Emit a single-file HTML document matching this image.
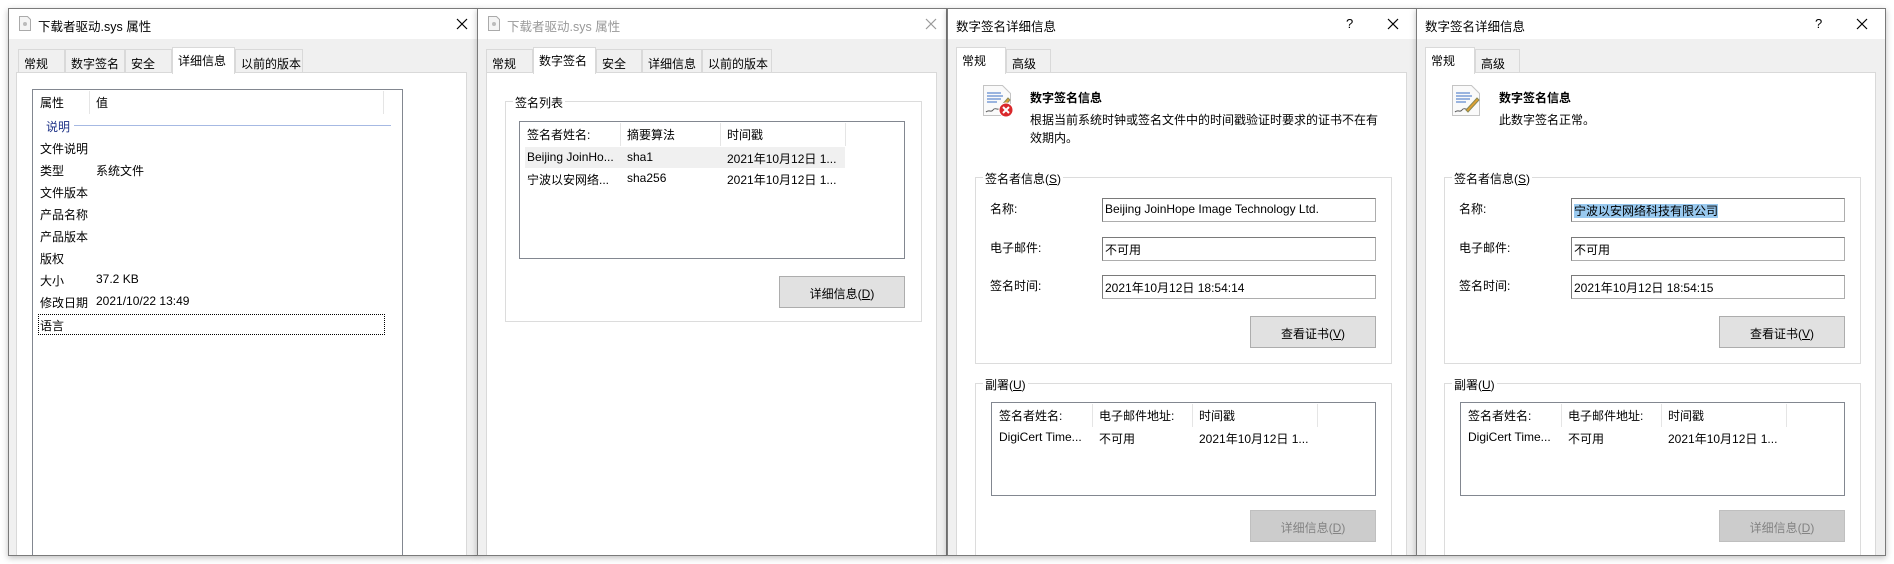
<!DOCTYPE html>
<html><head><meta charset="utf-8">
<style>
*{box-sizing:border-box;margin:0;padding:0}
body{width:1894px;height:564px;position:relative;background:#fff;overflow:hidden;font-family:"Liberation Sans","Noto Sans CJK SC",sans-serif;font-size:12px;color:#000}
.a{position:absolute;white-space:nowrap}
.win{position:absolute;top:8px;width:470px;height:548px;background:#f0f0f0;border:1px solid #7a7a7a;box-shadow:0 2px 6px rgba(0,0,0,.25);overflow:hidden}
.tb{position:absolute;left:0;top:0;width:100%;height:30px;background:#fff}
.tab{position:absolute;top:40px;height:24px;border:1px solid #d9d9d9;border-bottom:none;background:#f0f0f0;padding:5px 0 0 5px}
.tab.sel{top:38px;height:27px;background:#fff;z-index:3;padding-top:4px}
.panel{position:absolute;top:63px;left:8px;width:451px;height:500px;background:#fff;border:1px solid #d9d9d9}
.grp{position:absolute;border:1px solid #dcdcdc}
.gl{position:absolute;top:-8px;left:7px;background:#fff;padding:0 2px}
.lb{position:absolute;border:1px solid #828790;background:#fff}
.fld{position:absolute;border:1px solid #adadad;border-top-color:#7a7a7a;border-left-color:#7a7a7a;background:#fff;padding:3px 0 0 2px;height:24px}
.btn{position:absolute;background:#e1e1e1;border:1px solid #adadad;text-align:center;padding-top:8px}
.btn.dis{background:#cccccc;border-color:#bfbfbf;color:#838383}
.sep{position:absolute;width:1px;background:#e5e5e5}
u{text-decoration:underline}
</style></head><body>

<!-- Window 1 -->
<div class="win" style="left:8px">
 <div class="tb">
  <svg class="a" style="left:10px;top:7px" width="12" height="15"><path d="M0.5 .5h8l3 3v11h-11z" fill="#f4f4f4" stroke="#aaa"/><circle cx="6" cy="8" r="2" fill="#bbb"/></svg>
  <div class="a" style="left:29px;top:7px;font-size:12.5px">下载者驱动.sys 属性</div>
  <svg class="a" style="left:447px;top:9px" width="12" height="12"><path d="M1 1L11 11M11 1L1 11" stroke="#000" stroke-width="1.2"/></svg>
 </div>
 <div class="tab" style="left:9px;width:47px">常规</div>
 <div class="tab" style="left:56px;width:60px">数字签名</div>
 <div class="tab" style="left:116px;width:47px">安全</div>
 <div class="tab sel" style="left:163px;width:63px">详细信息</div>
 <div class="tab" style="left:226px;width:68px">以前的版本</div>
 <div class="panel" style="left:7px">
  <div class="lb" style="left:15px;top:16px;width:371px;height:500px">
   <div class="a" style="left:7px;top:4px">属性</div>
   <div class="sep" style="left:56px;top:1px;height:23px"></div>
   <div class="a" style="left:63px;top:4px">值</div>
   <div class="sep" style="left:350px;top:1px;height:23px"></div>
   <div class="a" style="left:13px;top:28px;color:#1e3287">说明</div>
   <div class="a" style="left:41px;top:35px;width:317px;height:1px;background:#a6b9e3"></div>
   <div class="a" style="left:7px;top:50px">文件说明</div>
   <div class="a" style="left:7px;top:72px">类型</div><div class="a" style="left:63px;top:72px">系统文件</div>
   <div class="a" style="left:7px;top:94px">文件版本</div>
   <div class="a" style="left:7px;top:116px">产品名称</div>
   <div class="a" style="left:7px;top:138px">产品版本</div>
   <div class="a" style="left:7px;top:160px">版权</div>
   <div class="a" style="left:7px;top:182px">大小</div><div class="a" style="left:63px;top:182px">37.2 KB</div>
   <div class="a" style="left:7px;top:204px">修改日期</div><div class="a" style="left:63px;top:204px">2021/10/22 13:49</div>
   <div class="a" style="left:5px;top:224px;width:347px;height:21px;border:1px dotted #000;padding:2px 0 0 1px">语言</div>
  </div>
 </div>
</div>

<!-- Window 2 -->
<div class="win" style="left:477px">
 <div class="tb">
  <svg class="a" style="left:10px;top:7px" width="12" height="15"><path d="M0.5 .5h8l3 3v11h-11z" fill="#f4f4f4" stroke="#aaa"/><circle cx="6" cy="8" r="2" fill="#bbb"/></svg>
  <div class="a" style="left:29px;top:7px;font-size:12.5px;color:#999">下载者驱动.sys 属性</div>
  <svg class="a" style="left:447px;top:9px" width="12" height="12"><path d="M1 1L11 11M11 1L1 11" stroke="#999" stroke-width="1.2"/></svg>
 </div>
 <div class="tab" style="left:8px;width:47px">常规</div>
 <div class="tab sel" style="left:55px;width:63px">数字签名</div>
 <div class="tab" style="left:118px;width:46px">安全</div>
 <div class="tab" style="left:164px;width:60px">详细信息</div>
 <div class="tab" style="left:224px;width:70px">以前的版本</div>
 <div class="panel">
  <div class="grp" style="left:18px;top:28px;width:417px;height:221px">
   <div class="gl">签名列表</div>
   <div class="lb" style="left:13px;top:19px;width:386px;height:138px">
    <div class="a" style="left:7px;top:4px">签名者姓名:</div>
    <div class="sep" style="left:100px;top:1px;height:23px"></div>
    <div class="a" style="left:107px;top:4px">摘要算法</div>
    <div class="sep" style="left:200px;top:1px;height:23px"></div>
    <div class="a" style="left:207px;top:4px">时间戳</div>
    <div class="sep" style="left:325px;top:1px;height:23px"></div>
    <div class="a" style="left:5px;top:25px;width:320px;height:21px;background:#f0f0f0"></div>
    <div class="a" style="left:7px;top:28px">Beijing JoinHo...</div>
    <div class="a" style="left:107px;top:28px">sha1</div>
    <div class="a" style="left:207px;top:28px">2021年10月12日 1...</div>
    <div class="a" style="left:7px;top:49px">宁波以安网络...</div>
    <div class="a" style="left:107px;top:49px">sha256</div>
    <div class="a" style="left:207px;top:49px">2021年10月12日 1...</div>
   </div>
   <div class="btn" style="left:273px;top:174px;width:126px;height:32px">详细信息(<u>D</u>)</div>
  </div>
 </div>
</div>

<!-- Window 3 -->
<div class="win" style="left:947px">
 <div class="tb">
  <div class="a" style="left:8px;top:7px;font-size:12.5px">数字签名详细信息</div>
  <div class="a" style="left:398px;top:7px;font-size:13px">?</div>
  <svg class="a" style="left:439px;top:9px" width="12" height="12"><path d="M1 1L11 11M11 1L1 11" stroke="#000" stroke-width="1.2"/></svg>
 </div>
 <div class="tab sel" style="left:8px;width:50px">常规</div>
 <div class="tab" style="left:58px;width:45px">高级</div>
 <div class="panel">
  <svg class="a" style="left:25px;top:12px" width="32" height="33">
   <path d="M1.5 .5h19l8 8v22h-27z" fill="#fafafa" stroke="#c4c4c4"/>
   <path d="M5 8h14M5 11h16M5 14h14M5 17h10" stroke="#3a6fc4" stroke-width="1"/>
   <path d="M4 27c3-3 5 1 7-2s4 0 6-1" stroke="#555" fill="none"/>
   <path d="M18 22l8-9 2 2-8 9z" fill="#e0a030" stroke="#885"/>
   <circle cx="24" cy="25" r="7" fill="#d9282b" stroke="#fff" stroke-width="1"/>
   <path d="M21 22l6 6M27 22l-6 6" stroke="#fff" stroke-width="2"/>
  </svg>
  <div class="a" style="left:73px;top:16px;font-weight:bold">数字签名信息</div>
  <div class="a" style="left:73px;top:38px">根据当前系统时钟或签名文件中的时间戳验证时要求的证书不在有</div>
  <div class="a" style="left:73px;top:56px">效期内。</div>
  <div class="grp" style="left:18px;top:104px;width:417px;height:187px">
   <div class="gl">签名者信息(<u>S</u>)</div>
   <div class="a" style="left:14px;top:22px">名称:</div>
   <div class="fld" style="left:126px;top:20px;width:274px">Beijing JoinHope Image Technology Ltd.</div>
   <div class="a" style="left:14px;top:61px">电子邮件:</div>
   <div class="fld" style="left:126px;top:59px;width:274px">不可用</div>
   <div class="a" style="left:14px;top:99px">签名时间:</div>
   <div class="fld" style="left:126px;top:97px;width:274px">2021年10月12日 18:54:14</div>
   <div class="btn" style="left:274px;top:138px;width:126px;height:32px">查看证书(<u>V</u>)</div>
  </div>
  <div class="grp" style="left:18px;top:310px;width:417px;height:200px">
   <div class="gl">副署(<u>U</u>)</div>
   <div class="lb" style="left:15px;top:18px;width:385px;height:94px">
    <div class="a" style="left:7px;top:4px">签名者姓名:</div>
    <div class="sep" style="left:100px;top:1px;height:23px"></div>
    <div class="a" style="left:107px;top:4px">电子邮件地址:</div>
    <div class="sep" style="left:200px;top:1px;height:23px"></div>
    <div class="a" style="left:207px;top:4px">时间戳</div>
    <div class="sep" style="left:325px;top:1px;height:23px"></div>
    <div class="a" style="left:7px;top:27px">DigiCert Time...</div>
    <div class="a" style="left:107px;top:27px">不可用</div>
    <div class="a" style="left:207px;top:27px">2021年10月12日 1...</div>
   </div>
   <div class="btn dis" style="left:274px;top:126px;width:126px;height:32px">详细信息(<u>D</u>)</div>
  </div>
 </div>
</div>

<!-- Window 4 -->
<div class="win" style="left:1416px">
 <div class="tb">
  <div class="a" style="left:8px;top:7px;font-size:12.5px">数字签名详细信息</div>
  <div class="a" style="left:398px;top:7px;font-size:13px">?</div>
  <svg class="a" style="left:439px;top:9px" width="12" height="12"><path d="M1 1L11 11M11 1L1 11" stroke="#000" stroke-width="1.2"/></svg>
 </div>
 <div class="tab sel" style="left:8px;width:50px">常规</div>
 <div class="tab" style="left:58px;width:45px">高级</div>
 <div class="panel">
  <svg class="a" style="left:25px;top:12px" width="32" height="33">
   <path d="M1.5 .5h19l8 8v22h-27z" fill="#fafafa" stroke="#c4c4c4"/>
   <path d="M5 8h14M5 11h16M5 14h14M5 17h10" stroke="#3a6fc4" stroke-width="1"/>
   <path d="M4 27c3-3 5 1 7-2s4 0 6-1" stroke="#555" fill="none"/>
   <path d="M15 25l11-12 2 2-11 12z" fill="#e0a030" stroke="#885"/>
  </svg>
  <div class="a" style="left:73px;top:16px;font-weight:bold">数字签名信息</div>
  <div class="a" style="left:73px;top:38px">此数字签名正常。</div>
  <div class="grp" style="left:18px;top:104px;width:417px;height:187px">
   <div class="gl">签名者信息(<u>S</u>)</div>
   <div class="a" style="left:14px;top:22px">名称:</div>
   <div class="fld" style="left:126px;top:20px;width:274px"><span style="background:#99c9ef">宁波以安网络科技有限公司</span></div>
   <div class="a" style="left:14px;top:61px">电子邮件:</div>
   <div class="fld" style="left:126px;top:59px;width:274px">不可用</div>
   <div class="a" style="left:14px;top:99px">签名时间:</div>
   <div class="fld" style="left:126px;top:97px;width:274px">2021年10月12日 18:54:15</div>
   <div class="btn" style="left:274px;top:138px;width:126px;height:32px">查看证书(<u>V</u>)</div>
  </div>
  <div class="grp" style="left:18px;top:310px;width:417px;height:200px">
   <div class="gl">副署(<u>U</u>)</div>
   <div class="lb" style="left:15px;top:18px;width:385px;height:94px">
    <div class="a" style="left:7px;top:4px">签名者姓名:</div>
    <div class="sep" style="left:100px;top:1px;height:23px"></div>
    <div class="a" style="left:107px;top:4px">电子邮件地址:</div>
    <div class="sep" style="left:200px;top:1px;height:23px"></div>
    <div class="a" style="left:207px;top:4px">时间戳</div>
    <div class="sep" style="left:325px;top:1px;height:23px"></div>
    <div class="a" style="left:7px;top:27px">DigiCert Time...</div>
    <div class="a" style="left:107px;top:27px">不可用</div>
    <div class="a" style="left:207px;top:27px">2021年10月12日 1...</div>
   </div>
   <div class="btn dis" style="left:274px;top:126px;width:126px;height:32px">详细信息(<u>D</u>)</div>
  </div>
 </div>
</div>

</body></html>
